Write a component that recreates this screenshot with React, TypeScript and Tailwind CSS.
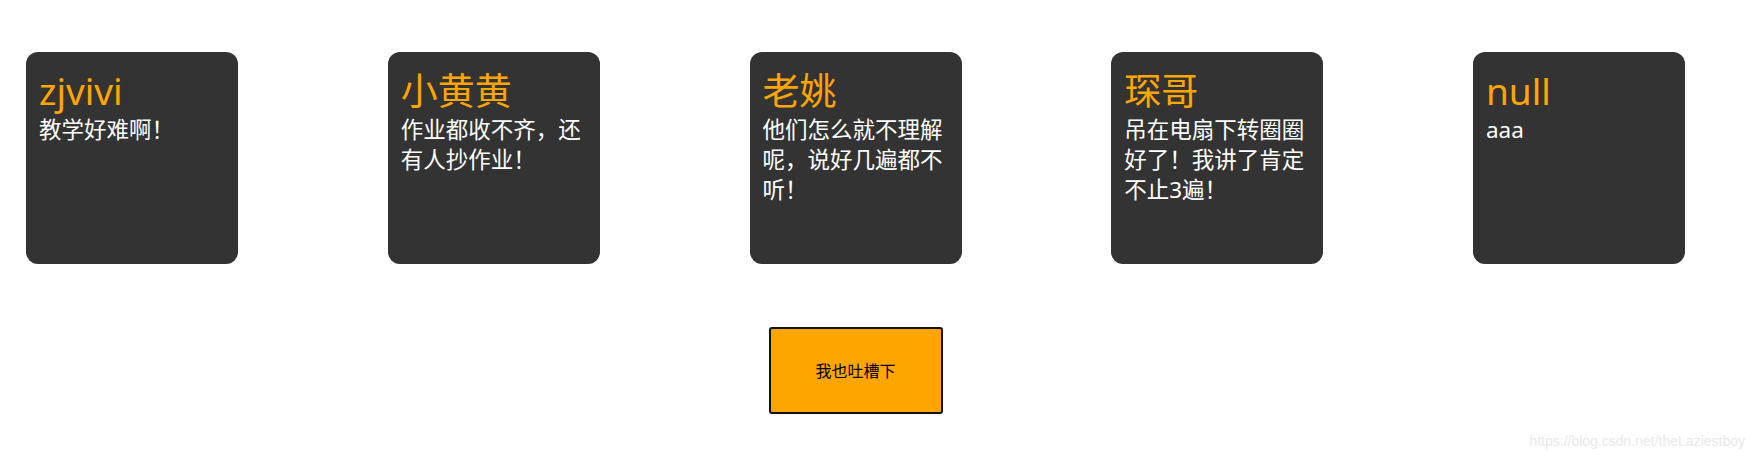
const cards = [
  { name: "zjvivi", text: "教学好难啊！" },
  { name: "小黄黄", text: "作业都收不齐，还有人抄作业！" },
  { name: "老姚", text: "他们怎么就不理解呢，说好几遍都不听！" },
  { name: "琛哥", text: "吊在电扇下转圈圈好了！我讲了肯定不止3遍！" },
  { name: "null", text: "aaa" },
];

export default function App() {
  return (
    <div
      className="relative h-[459px] w-[1755px] overflow-hidden bg-white"
      style={{ fontFamily: '"Noto Sans", "Noto Sans CJK SC", sans-serif' }}
    >
      <div className="ml-[26px] w-[1659px] pt-[52px]">
        <div className="flex justify-between">
          {cards.map((c) => (
            <div
              key={c.name}
              className="h-[212px] w-[212px] rounded-[12px] bg-[#333333] px-[13px] pt-[15px]"
            >
              <div className="text-[37px] leading-[48px] text-[#ffa500]">{c.name}</div>
              <div className="text-[22.5px] leading-[30px] text-white">{c.text}</div>
            </div>
          ))}
        </div>

        <div className="mt-[63px] flex justify-center">
          <button
            type="button"
            className="h-[87px] w-[174px] rounded-[3px] border-2 border-[#111] bg-[#ffa500] text-[16px] text-black"
          >
            我也吐槽下
          </button>
        </div>
      </div>

      <div
        className="absolute bottom-[7px] right-[10px] text-[14px] text-[#e8e8e8]"
        style={{ fontFamily: '"Liberation Sans", Arial, sans-serif' }}
      >
        https://blog.csdn.net/theLaziestboy
      </div>
    </div>
  );
}
